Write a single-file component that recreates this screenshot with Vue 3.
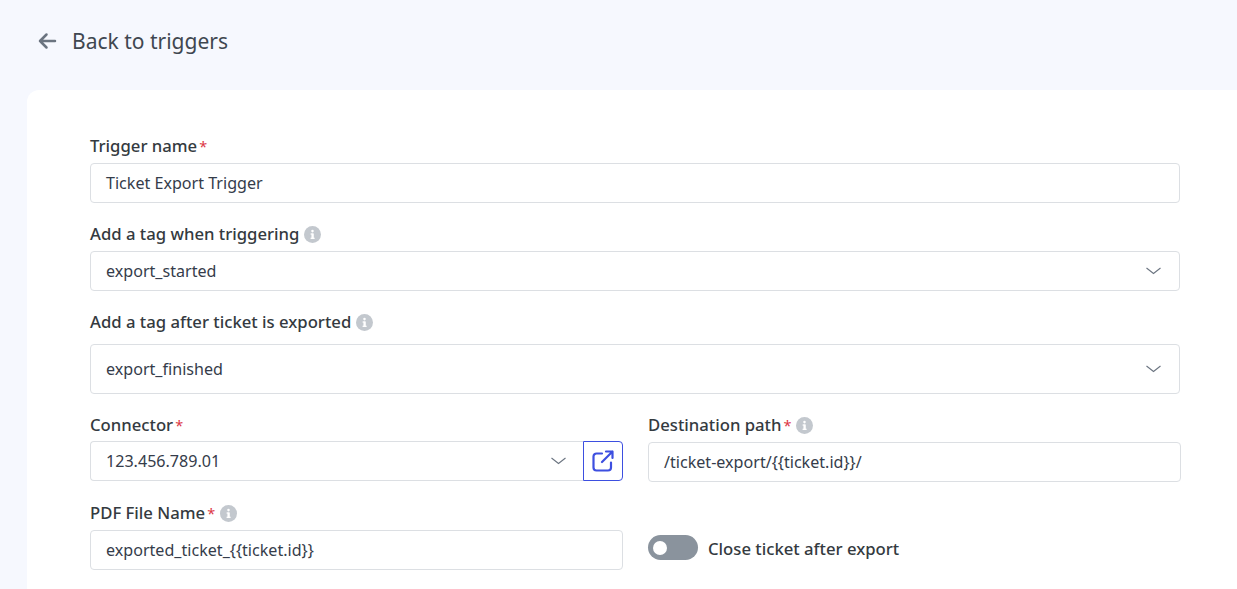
<script setup>
const infoPath = 'M8 0a8 8 0 1 0 0 16A8 8 0 0 0 8 0z'
const destPath = '/ticket-export/{{ticket.id}}/'
const pdfName = 'exported_ticket_{{ticket.id}}'
</script>

<template>
  <div class="page">
    <header class="back">
      <svg class="arrow" width="20" height="20" viewBox="0 0 20 20" fill="none" stroke="#6b7480" stroke-width="2.5" stroke-linecap="round" stroke-linejoin="round">
        <path d="M18 10H3M9.500 3.500 3 10l6.500 6.500" />
      </svg>
      <span>Back to triggers</span>
    </header>
    <main class="card">
      <div class="field f1">
        <label class="label">Trigger name<span class="req">*</span></label>
        <div class="control">Ticket Export Trigger</div>
      </div>
      <div class="field f2">
        <label class="label">Add a tag when triggering
          <svg class="info" viewBox="0 0 16 16"><path :d="infoPath" fill="#c3c8ce" /><rect x="7" y="7" width="2.2" height="5" fill="#fff" /><rect x="6.2" y="11" width="3.8" height="1.2" fill="#fff" /><rect x="6.2" y="7" width="2" height="1.1" fill="#fff" /><circle cx="8" cy="4.8" r="1.2" fill="#fff" /></svg>
        </label>
        <div class="control select">export_started
          <svg class="chev" width="15" height="8" viewBox="0 0 15 8" fill="none" stroke="#6b7480" stroke-width="1.1"><path d="M.5 1l7 5.500 7-5.500" /></svg>
        </div>
      </div>
      <div class="field f3">
        <label class="label">Add a tag after ticket is exported
          <svg class="info" viewBox="0 0 16 16"><path :d="infoPath" fill="#c3c8ce" /><rect x="7" y="7" width="2.2" height="5" fill="#fff" /><rect x="6.2" y="11" width="3.8" height="1.2" fill="#fff" /><rect x="6.2" y="7" width="2" height="1.1" fill="#fff" /><circle cx="8" cy="4.8" r="1.2" fill="#fff" /></svg>
        </label>
        <div class="control select tall">export_finished
          <svg class="chev" width="15" height="8" viewBox="0 0 15 8" fill="none" stroke="#6b7480" stroke-width="1.1"><path d="M.5 1l7 5.500 7-5.500" /></svg>
        </div>
      </div>
      <div class="grid">
        <div class="field">
          <label class="label">Connector<span class="req">*</span></label>
          <div class="joined">
            <div class="control select grow">123.456.789.01
              <svg class="chev near" width="15" height="8" viewBox="0 0 15 8" fill="none" stroke="#6b7480" stroke-width="1.1"><path d="M.5 1l7 5.500 7-5.500" /></svg>
            </div>
            <div class="link">
              <svg width="22" height="22" viewBox="0 0 22 22" fill="none" stroke="#3d4fe0" stroke-width="2.2" stroke-linecap="round" stroke-linejoin="round">
                <path d="M19 12.500V17.500a3 3 0 0 1-3 3H4.500a3 3 0 0 1-3-3V6.500a3 3 0 0 1 3-3H10" />
                <path d="M14 1.500h6.500V8M20.500 1.500 10 12" />
              </svg>
            </div>
          </div>
        </div>
        <div class="field dest">
          <label class="label">Destination path<span class="req">*</span>
            <svg class="info" viewBox="0 0 16 16"><path :d="infoPath" fill="#c3c8ce" /><rect x="7" y="7" width="2.2" height="5" fill="#fff" /><rect x="6.2" y="11" width="3.8" height="1.2" fill="#fff" /><rect x="6.2" y="7" width="2" height="1.1" fill="#fff" /><circle cx="8" cy="4.8" r="1.2" fill="#fff" /></svg>
          </label>
          <div class="control wide">{{ destPath }}</div>
        </div>
        <div class="field pdf">
          <label class="label">PDF File Name<span class="req">*</span>
            <svg class="info" viewBox="0 0 16 16"><path :d="infoPath" fill="#c3c8ce" /><rect x="7" y="7" width="2.2" height="5" fill="#fff" /><rect x="6.2" y="11" width="3.8" height="1.2" fill="#fff" /><rect x="6.2" y="7" width="2" height="1.1" fill="#fff" /><circle cx="8" cy="4.8" r="1.2" fill="#fff" /></svg>
          </label>
          <div class="control">{{ pdfName }}</div>
        </div>
        <div class="toggle-row">
          <span class="toggle"><span class="knob"></span></span>
          <span class="toggle-label">Close ticket after export</span>
        </div>
      </div>
    </main>
  </div>
</template>

<style>
html, body { margin: 0; background: #f6f8fe; overflow: hidden; }
</style>

<style scoped>
.page {
  height: 589px;
  overflow: hidden;
  background: #f6f8fe;
  font-family: "Noto Sans", sans-serif;
  color: #343a40;
  display: flex;
  flex-direction: column;
}
.back {
  height: 90px;
  box-sizing: border-box;
  padding: 0 0 8px 37px;
  display: flex;
  align-items: center;
  gap: 15px;
  font-size: 21px;
  color: #3f4750;
}
.arrow { flex: none; }
.card {
  flex: 1;
  margin-left: 27px;
  background: #fff;
  border-radius: 12px 0 0 0;
  padding: 43px 57px 0 63px;
}
.label {
  display: flex;
  align-items: center;
  height: 26px;
  margin-bottom: 4px;
  font-size: 16.7px;
  font-weight: 500;
  color: #343a40;
  line-height: 26px;
}
.req { color: #dc3545; margin-left: 2px; font-weight: 400; font-size: 14.5px; }
.info { width: 17px; height: 17px; margin-left: 5px; flex: none; }
.control {
  box-sizing: border-box;
  height: 40px;
  border: 1px solid #dcdfe3;
  border-radius: 4px;
  background: #fff;
  padding: 0 15px;
  display: flex;
  align-items: center;
  justify-content: space-between;
  font-size: 16.1px;
  color: #353c4a;
}
.f2 { margin-top: 18px; }
.f3 { margin-top: 18px; }
.f3 .label { margin-bottom: 9px; }
.tall { height: 50px; }
.chev { margin-right: 3px; flex: none; }
.grid {
  margin-top: 18px;
  display: grid;
  grid-template-columns: 533px 533px;
  column-gap: 25px;
  row-gap: 18px;
  width: 1091px;
}
.joined { display: flex; margin-top: -1px; }
.grow { flex: 1; border-right: none; border-radius: 4px 0 0 4px; }
.near { margin-right: 2px; }
.link {
  box-sizing: border-box;
  width: 40px;
  height: 40px;
  border: 1px solid #3d4fe0;
  border-radius: 0 4px 4px 0;
  display: flex;
  align-items: center;
  justify-content: center;
}
.toggle-row {
  display: flex;
  align-items: flex-start;
  gap: 10px;
  padding-top: 35px;
}
.toggle {
  width: 50px;
  height: 25px;
  border-radius: 13px;
  background: #8a939d;
  display: flex;
  align-items: center;
  padding-left: 5px;
  box-sizing: border-box;
}
.knob { width: 14px; height: 14px; border-radius: 50%; background: #fff; }
.toggle-label { font-size: 16.7px; font-weight: 500; color: #343a40; line-height: 28px; }
</style>
